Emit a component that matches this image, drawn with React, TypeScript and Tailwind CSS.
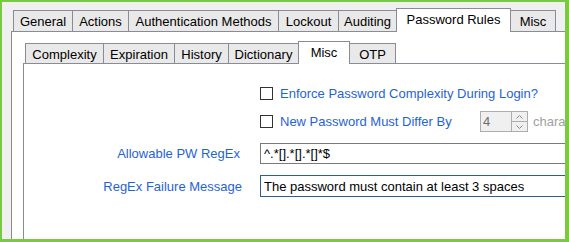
import React from 'react';

const outerTabs = [
  { label: 'General', w: 'w-[60px]' },
  { label: 'Actions', w: 'w-[57px]' },
  { label: 'Authentication Methods', w: 'w-[151px]' },
  { label: 'Lockout', w: 'w-[61px]' },
  { label: 'Auditing', w: 'w-[59px]' },
  { label: 'Password Rules', w: 'w-[115px]', active: true },
  { label: 'Misc', w: 'w-[46px]' },
];

const innerTabs = [
  { label: 'Complexity', w: 'w-[79px]' },
  { label: 'Expiration', w: 'w-[72px]' },
  { label: 'History', w: 'w-[55px]' },
  { label: 'Dictionary', w: 'w-[71px]' },
  { label: 'Misc', w: 'w-[52px]', active: true },
  { label: 'OTP', w: 'w-[47px]' },
];

type Tab = { label: string; w: string; active?: boolean };

const TabRow: React.FC<{ tabs: Tab[]; small?: boolean }> = ({ tabs, small }) => (
  <div className="flex items-end">
    {tabs.map((t, i) =>
      t.active ? (
        <div
          key={i}
          className={`${t.w} ${small ? 'h-[23px]' : 'h-[24px]'} -ml-px -mb-px relative z-10 flex items-center justify-center bg-white border-t border-l border-r border-[#898c95] pb-[2px] whitespace-nowrap`}
        >
          {t.label}
        </div>
      ) : (
        <div
          key={i}
          className={`${t.w} ${small ? 'h-[20px]' : 'h-[21px]'} ${i === 0 ? '' : '-ml-px'} flex items-center justify-center bg-[#e9e9e9] border-t border-l border-r border-[#898c95] pt-[1px] whitespace-nowrap`}
        >
          {t.label}
        </div>
      )
    )}
  </div>
);

const Checkbox: React.FC = () => (
  <div className="w-[13px] h-[13px] border border-[#333333] bg-white shrink-0" />
);

const App: React.FC = () => {
  return (
    <div className="w-[569px] h-[242px] overflow-hidden bg-[#f0f0f0] border-[#7ac943] border-t-2 border-l-2 border-r-4 border-b-[3px] flex flex-col font-['Liberation_Sans',Arial,sans-serif] text-[13px] text-black leading-[15px]">
      {/* Outer tabs */}
      <div className="pl-[11px] pt-[6px]">
        <TabRow tabs={outerTabs} />
      </div>

      {/* Outer panel */}
      <div className="ml-[9px] flex-1 bg-white border-l border-t border-[#898c95] flex flex-col">
        <div className="pl-[13px] pt-[9px]">
          <TabRow tabs={innerTabs} small />
        </div>

        {/* Inner panel */}
        <div className="ml-[11px] flex-1 bg-white border-l border-t border-[#898c95] flex flex-col pt-[21px]">
          <div className="flex items-center h-[16px]">
            <div className="w-[236px] shrink-0" />
            <Checkbox />
            <span className="ml-[7px] text-[#1f64d2] whitespace-nowrap">
              Enforce Password Complexity During Login?
            </span>
          </div>

          <div className="flex items-center h-[21px] mt-[10px]">
            <div className="w-[236px] shrink-0" />
            <Checkbox />
            <span className="ml-[7px] w-[200px] shrink-0 text-[#1f64d2] whitespace-nowrap">
              New Password Must Differ By
            </span>
            <div className="flex h-[21px] w-[48px] shrink-0 border border-[#adadad] bg-[#f0f0f0]">
              <div className="flex-1 flex items-center pl-[2px] text-[#6d6d6d]">4</div>
              <div className="w-[16px] flex flex-col border-l border-[#adadad]">
                <div className="flex-1 flex items-center justify-center border-b border-[#adadad]">
                  <svg width="7" height="4" viewBox="0 0 7 4">
                    <polyline points="0.5,3.5 3.5,0.5 6.5,3.5" fill="none" stroke="#8a8a8a" strokeWidth="1" />
                  </svg>
                </div>
                <div className="flex-1 flex items-center justify-center">
                  <svg width="7" height="4" viewBox="0 0 7 4">
                    <polyline points="0.5,0.5 3.5,3.5 6.5,0.5" fill="none" stroke="#8a8a8a" strokeWidth="1" />
                  </svg>
                </div>
              </div>
            </div>
            <span className="ml-[5px] text-[#a0a0a0] whitespace-nowrap">characters</span>
          </div>

          <div className="flex items-center h-[21px] mt-[11px]">
            <div className="w-[216px] shrink-0 text-right text-[#1f64d2] whitespace-nowrap">
              Allowable PW RegEx
            </div>
            <div className="ml-[20px] w-[330px] h-[21px] shrink-0 border border-[#7a7a7a] bg-white flex items-center pl-[3px] whitespace-nowrap">
              ^.*[].*[].*[]*$
            </div>
          </div>

          <div className="flex items-center h-[22px] mt-[11px]">
            <div className="w-[218px] shrink-0 text-right text-[#1f64d2] whitespace-nowrap">
              RegEx Failure Message
            </div>
            <div className="ml-[18px] w-[330px] h-[22px] shrink-0 border border-[#2b5f8e] bg-white flex items-center pl-[3px] whitespace-nowrap">
              The password must contain at least 3 spaces
            </div>
          </div>
        </div>
      </div>
    </div>
  );
};

export default App;
